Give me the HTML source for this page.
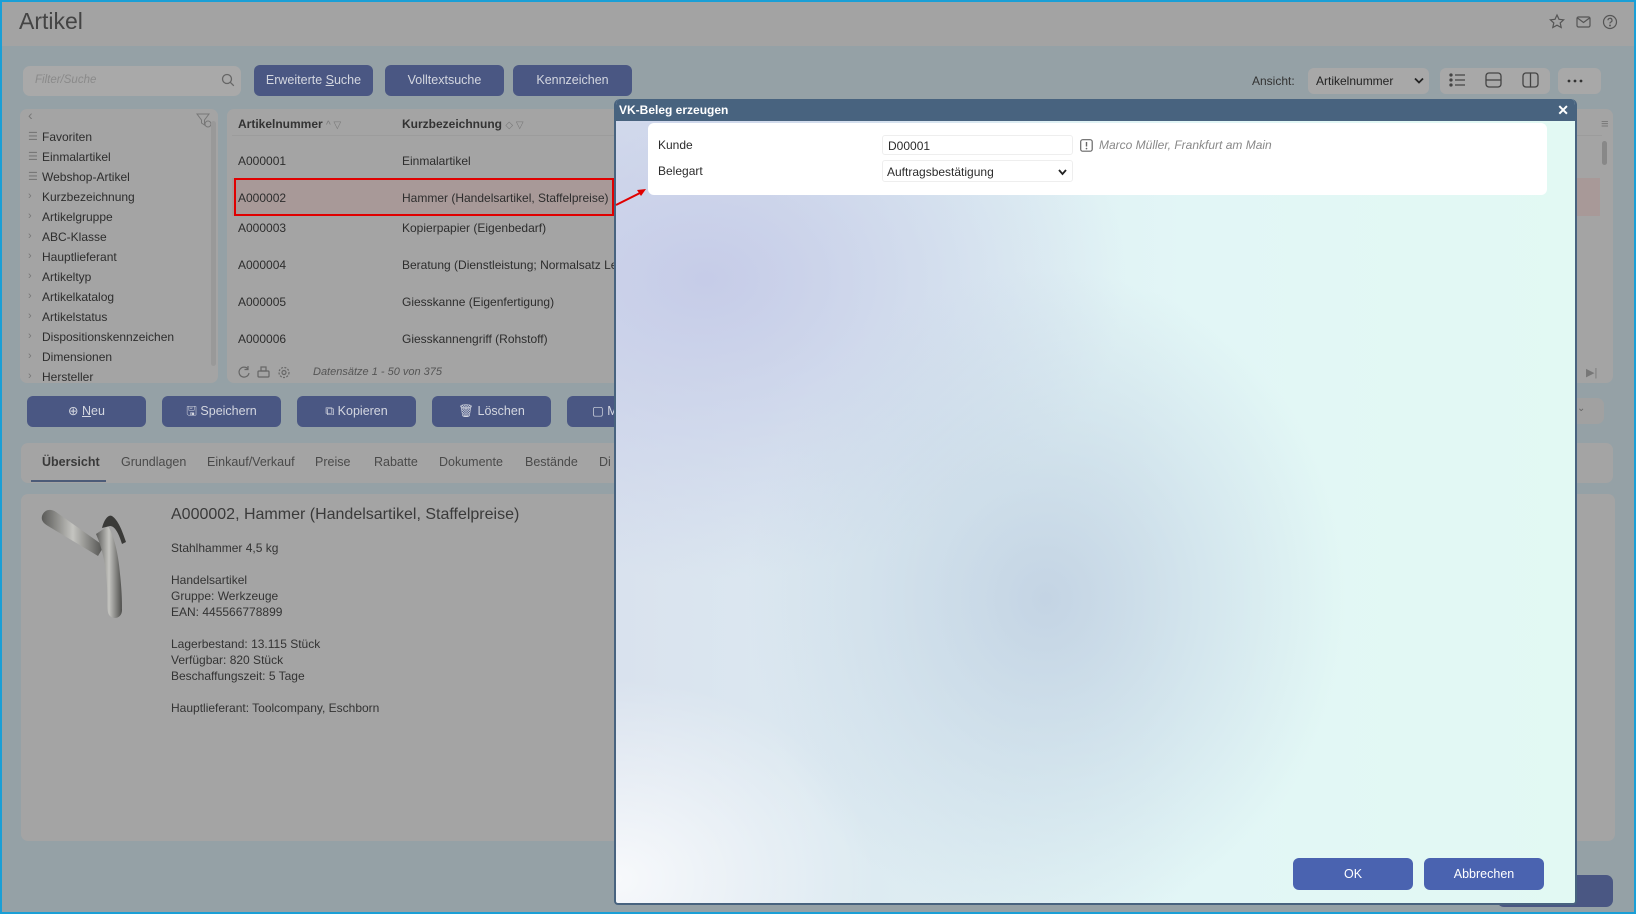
<!DOCTYPE html>
<html><head><meta charset="utf-8"><style>
*{box-sizing:border-box;margin:0;padding:0}
body{width:1636px;height:914px;overflow:hidden;font-family:"Liberation Sans",sans-serif;font-size:12px;color:#2c2c2c;background:#95a1a6;position:relative}
.abs{position:absolute}
.frame{position:absolute;left:0;top:0;width:1636px;height:914px;border:2px solid #1a9fd6;pointer-events:none;z-index:50}
.hdr{left:0;top:0;width:1636px;height:46px;background:#a3a3a3}
.btn{position:absolute;background:#4a5783;color:#d4d7e0;border-radius:6px;text-align:center;font-size:12.5px;line-height:31px;height:31px}
.panel{position:absolute;background:#a4a4a4;border-radius:7px}
.tree div{position:absolute;left:22px;white-space:nowrap;color:#2d2d2d}
.tree span{position:absolute;left:-14px;color:#777;font-size:11px}
.row{position:absolute;white-space:nowrap;color:#2d2d2d}
.tab{position:absolute;top:455px;color:#4a4a4a;font-size:12.5px}
.ct{position:absolute;left:171px;color:#333;white-space:nowrap}
.dlg{left:614px;top:99px;width:963px;height:806px;border:2px solid #48637f;border-top:none;border-radius:6px 6px 4px 4px;overflow:hidden;
background:
radial-gradient(ellipse 300px 330px at 430px 500px, rgba(196,212,228,1), rgba(196,212,228,0) 100%),
radial-gradient(ellipse 420px 300px at 90px 180px, rgba(198,204,232,1), rgba(198,204,232,0) 100%),
radial-gradient(ellipse 260px 200px at 0px 780px, rgba(255,255,255,.8), rgba(255,255,255,0) 100%),
linear-gradient(90deg,#d9e2ee 0%,#e2f6f6 60%,#e2f9f3 100%)}
.dt{height:22px;background:#48637f;color:#fff;font-weight:bold;font-size:12px;line-height:22px;padding-left:3px}
.ok{position:absolute;background:#4a63b0;color:#fff;border-radius:6px;text-align:center;line-height:32px;height:32px;width:120px;font-size:12.5px}
</style></head><body>
<div class="frame"></div>
<div class="abs hdr"></div>
<div class="abs" style="left:19px;top:8px;font-size:23px;color:#444">Artikel</div>
<svg class="abs" style="left:1548px;top:12px" width="80" height="20" viewBox="0 0 80 20" fill="none" stroke="#555" stroke-width="1.2">
<path d="M9 3l2 4.3 4.6.5-3.4 3.1 1 4.6L9 13.2 4.8 15.5l1-4.6L2.4 7.8 7 7.3z"/>
<rect x="29" y="5" width="13" height="10" rx="1.5"/><path d="M29.5 6l6 4.5 6-4.5"/>
<circle cx="62" cy="10" r="6.5"/><path d="M60 8.3a2 2 0 1 1 2.6 1.9c-.6.2-.6.6-.6 1.3"/><circle cx="62" cy="13.5" r=".4" fill="#555"/>
</svg>
<div class="abs" style="left:23px;top:66px;width:218px;height:30px;background:#a9a9a9;border-radius:7px"></div>
<div class="abs" style="left:35px;top:74px;color:#8a8a8a;font-style:italic;font-size:11.5px">Filter/Suche</div>
<svg class="abs" style="left:221px;top:73px" width="14" height="14" fill="none" stroke="#666" stroke-width="1.3"><circle cx="6" cy="6" r="4.5"/><path d="M9.3 9.3l3.5 3.5"/></svg>
<div class="btn" style="left:254px;top:65px;width:119px">Erweiterte <u>S</u>uche</div>
<div class="btn" style="left:385px;top:65px;width:119px">Volltextsuche</div>
<div class="btn" style="left:513px;top:65px;width:119px">Kennzeichen</div>
<div class="abs" style="left:1252px;top:74px;color:#333">Ansicht:</div>
<div class="abs" style="left:1308px;top:68px;width:121px;height:26px;background:#a8a8a8;border-radius:6px"></div>
<div class="abs" style="left:1316px;top:74px;color:#222">Artikelnummer</div>
<svg class="abs" style="left:1414px;top:77px" width="10" height="8"><path d="M1 1.5l4 4 4-4" stroke="#222" stroke-width="1.8" fill="none"/></svg>
<div class="abs" style="left:1440px;top:68px;width:110px;height:26px;background:#a8a8a8;border-radius:6px"></div>
<div class="abs" style="left:1558px;top:68px;width:43px;height:26px;background:#a8a8a8;border-radius:6px"></div>
<svg class="abs" style="left:1448px;top:71px" width="160" height="20" fill="none" stroke="#444" stroke-width="1.3">
<circle cx="3" cy="4" r="1" fill="#444"/><circle cx="3" cy="9" r="1" fill="#444"/><circle cx="3" cy="14" r="1" fill="#444"/><path d="M7 4h10M7 9h10M7 14h10"/>
<rect x="38" y="2" width="15" height="14" rx="3"/><path d="M38 9h15"/>
<rect x="75" y="2" width="15" height="14" rx="3"/><path d="M82.5 2v14"/>
<circle cx="121" cy="10" r="1.4" fill="#333" stroke="none"/><circle cx="127" cy="10" r="1.4" fill="#333" stroke="none"/><circle cx="133" cy="10" r="1.4" fill="#333" stroke="none"/>
</svg>
<div class="panel tree" style="left:20px;top:109px;width:198px;height:274px">
<span style="left:8px;top:-2px;position:absolute;color:#777;font-size:14px">‹</span>
<svg style="position:absolute;left:176px;top:3px" width="16" height="16" fill="none" stroke="#777"><path d="M1 2h12l-4.5 6v5l-3-2V8z"/><circle cx="12" cy="12" r="3"/></svg>
<div style="position:absolute;left:191px;top:12px;width:5px;height:245px;background:#999;border-radius:3px"></div>
<div style="top:21px"><span>☰</span>Favoriten</div>
<div style="top:41px"><span>☰</span>Einmalartikel</div>
<div style="top:61px"><span>☰</span>Webshop-Artikel</div>
<div style="top:81px"><span>›</span>Kurzbezeichnung</div>
<div style="top:101px"><span>›</span>Artikelgruppe</div>
<div style="top:121px"><span>›</span>ABC-Klasse</div>
<div style="top:141px"><span>›</span>Hauptlieferant</div>
<div style="top:161px"><span>›</span>Artikeltyp</div>
<div style="top:181px"><span>›</span>Artikelkatalog</div>
<div style="top:201px"><span>›</span>Artikelstatus</div>
<div style="top:221px"><span>›</span>Dispositionskennzeichen</div>
<div style="top:241px"><span>›</span>Dimensionen</div>
<div style="top:261px"><span>›</span>Hersteller</div>
</div>
<div class="panel" style="left:227px;top:109px;width:1386px;height:274px"></div>
<div class="abs" style="left:232px;top:135px;width:1370px;height:1px;background:#9c9c9c"></div>
<div class="abs" style="left:232px;top:178px;width:1368px;height:38px;background:#a89998"></div>
<div class="abs" style="left:1602px;top:141px;width:5px;height:24px;background:#888;border-radius:3px"></div>
<div class="abs" style="left:1601px;top:116px;color:#777;font-size:13px">≡</div>
<div class="abs" style="left:1586px;top:366px;color:#777;font-size:11px">▶|</div>
<div class="abs" style="left:234px;top:178px;width:380px;height:38px;border:2px solid #e00000"></div>
<div class="row" style="left:238px;top:117px;font-weight:bold;color:#333">Artikelnummer <span style="font-weight:normal;color:#777;font-size:10px">^ ▽</span></div>
<div class="row" style="left:402px;top:117px;font-weight:bold;color:#333">Kurzbezeichnung <span style="font-weight:normal;color:#777;font-size:10px">◇ ▽</span></div>
<div class="row" style="left:238px;top:154px">A000001</div><div class="row" style="left:402px;top:154px">Einmalartikel</div>
<div class="row" style="left:238px;top:191px">A000002</div><div class="row" style="left:402px;top:191px">Hammer (Handelsartikel, Staffelpreise)</div>
<div class="row" style="left:238px;top:221px">A000003</div><div class="row" style="left:402px;top:221px">Kopierpapier (Eigenbedarf)</div>
<div class="row" style="left:238px;top:258px">A000004</div><div class="row" style="left:402px;top:258px">Beratung (Dienstleistung; Normalsatz Le</div>
<div class="row" style="left:238px;top:295px">A000005</div><div class="row" style="left:402px;top:295px">Giesskanne (Eigenfertigung)</div>
<div class="row" style="left:238px;top:332px">A000006</div><div class="row" style="left:402px;top:332px">Giesskannengriff (Rohstoff)</div>
<svg class="abs" style="left:237px;top:365px" width="60" height="15" fill="none" stroke="#666" stroke-width="1.2"><path d="M11 4a5 5 0 1 0 1 4M11 1v3.5H7.5"/><rect x="21" y="6" width="11" height="6" rx="1"/><rect x="24" y="2" width="5" height="4"/><circle cx="47" cy="7.5" r="2"/><circle cx="47" cy="7.5" r="5" stroke-dasharray="2 1.4"/></svg>
<div class="row" style="left:313px;top:366px;font-style:italic;color:#555;font-size:11px">Datensätze 1 - 50 von 375</div>
<div class="btn" style="left:27px;top:396px;width:119px">⊕ <u>N</u>eu</div>
<div class="btn" style="left:162px;top:396px;width:119px">🖫 Speichern</div>
<div class="btn" style="left:297px;top:396px;width:119px">⧉ Kopieren</div>
<div class="btn" style="left:432px;top:396px;width:119px">🗑 Löschen</div>
<div class="btn" style="left:567px;top:396px;width:119px;text-align:left;padding-left:25px">▢ M</div>
<div class="abs" style="left:1560px;top:398px;width:44px;height:26px;background:#a1a1a1;border-radius:7px"></div>
<div class="abs" style="left:1577px;top:403px;color:#666;font-size:10px">⌄</div>
<div class="panel" style="left:21px;top:443px;width:1592px;height:40px"></div>
<div class="tab" style="left:42px;font-weight:bold;color:#3a3a3a">Übersicht</div>
<div class="abs" style="left:31px;top:480px;width:75px;height:2px;background:#4c5b78"></div>
<div class="tab" style="left:121px">Grundlagen</div>
<div class="tab" style="left:207px">Einkauf/Verkauf</div>
<div class="tab" style="left:315px">Preise</div>
<div class="tab" style="left:374px">Rabatte</div>
<div class="tab" style="left:439px">Dokumente</div>
<div class="tab" style="left:525px">Bestände</div>
<div class="tab" style="left:599px">Di</div>
<div class="panel" style="left:21px;top:494px;width:1594px;height:347px"></div>
<svg class="abs" style="left:40px;top:506px" width="115" height="115">
<defs><linearGradient id="g" x1="0" x2="1"><stop offset="0" stop-color="#5a5a58"/><stop offset=".5" stop-color="#c4c4c0"/><stop offset="1" stop-color="#4e4e4c"/></linearGradient></defs>
<path d="M2 10c2-6 8-8 14-4l48 34-6 10L8 20C3 17 1 14 2 10z" fill="url(#g)"/>
<path d="M56 28l12-8c6 10 10 26 12 48 2 18 2 30 2 36 0 8-8 10-12 6-4-4-2-12-3-30-1-20-4-36-11-52z" fill="url(#g)"/>
<path d="M62 22c2-8 6-14 10-12 6 4 10 14 14 26l-4 2c-3-10-7-18-12-18z" fill="#3a3a38"/>
</svg>
<div class="ct" style="top:506px;font-size:16px;color:#3a3a3a">A000002, Hammer (Handelsartikel, Staffelpreise)</div>
<div class="ct" style="top:541px">Stahlhammer 4,5 kg</div>
<div class="ct" style="top:573px">Handelsartikel</div>
<div class="ct" style="top:589px">Gruppe: Werkzeuge</div>
<div class="ct" style="top:605px">EAN: 445566778899</div>
<div class="ct" style="top:637px">Lagerbestand: 13.115 Stück</div>
<div class="ct" style="top:653px">Verfügbar: 820 Stück</div>
<div class="ct" style="top:669px">Beschaffungszeit: 5 Tage</div>
<div class="ct" style="top:701px">Hauptlieferant: Toolcompany, Eschborn</div>
<div class="abs" style="left:1497px;top:875px;width:116px;height:32px;background:#4a5783;border-radius:7px"></div>
<svg class="abs" style="left:612px;top:184px;z-index:5" width="40" height="26"><path d="M4 21L30 8" stroke="#e00000" stroke-width="2"/><path d="M34 5l-9 1 4 6z" fill="#e00000"/></svg>
<div class="abs dlg">
<div class="dt">VK-Beleg erzeugen<span style="position:absolute;right:6px;top:0;font-size:14px">✕</span></div>
<div style="position:absolute;left:32px;top:24px;width:899px;height:72px;background:#fff;border-radius:6px"></div>
<div style="position:absolute;left:42px;top:39px">Kunde</div>
<div style="position:absolute;left:42px;top:65px">Belegart</div>
<div style="position:absolute;left:266px;top:36px;width:191px;height:20px;border:1px solid #eee;border-radius:3px;padding:3px 5px">D00001</div>
<div style="position:absolute;left:266px;top:61px;width:191px;height:22px;border:1px solid #eee;border-radius:3px;padding:4px 4px">Auftragsbestätigung<svg style="position:absolute;right:5px;top:8px" width="9" height="7"><path d="M1 1l3.5 4 3.5-4" stroke="#222" stroke-width="1.8" fill="none"/></svg></div>
<svg style="position:absolute;left:464px;top:40px" width="13" height="13"><rect x=".7" y=".7" width="11.5" height="11.5" rx="2" fill="none" stroke="#666" stroke-width="1.2"/><path d="M6.5 3v4.5" stroke="#666" stroke-width="1.4"/><circle cx="6.5" cy="9.6" r=".8" fill="#666"/></svg>
<div style="position:absolute;left:483px;top:39px;font-style:italic;color:#888">Marco Müller, Frankfurt am Main</div>
<div class="ok" style="left:677px;top:759px">OK</div>
<div class="ok" style="left:808px;top:759px">Abbrechen</div>
</div>
</body></html>
